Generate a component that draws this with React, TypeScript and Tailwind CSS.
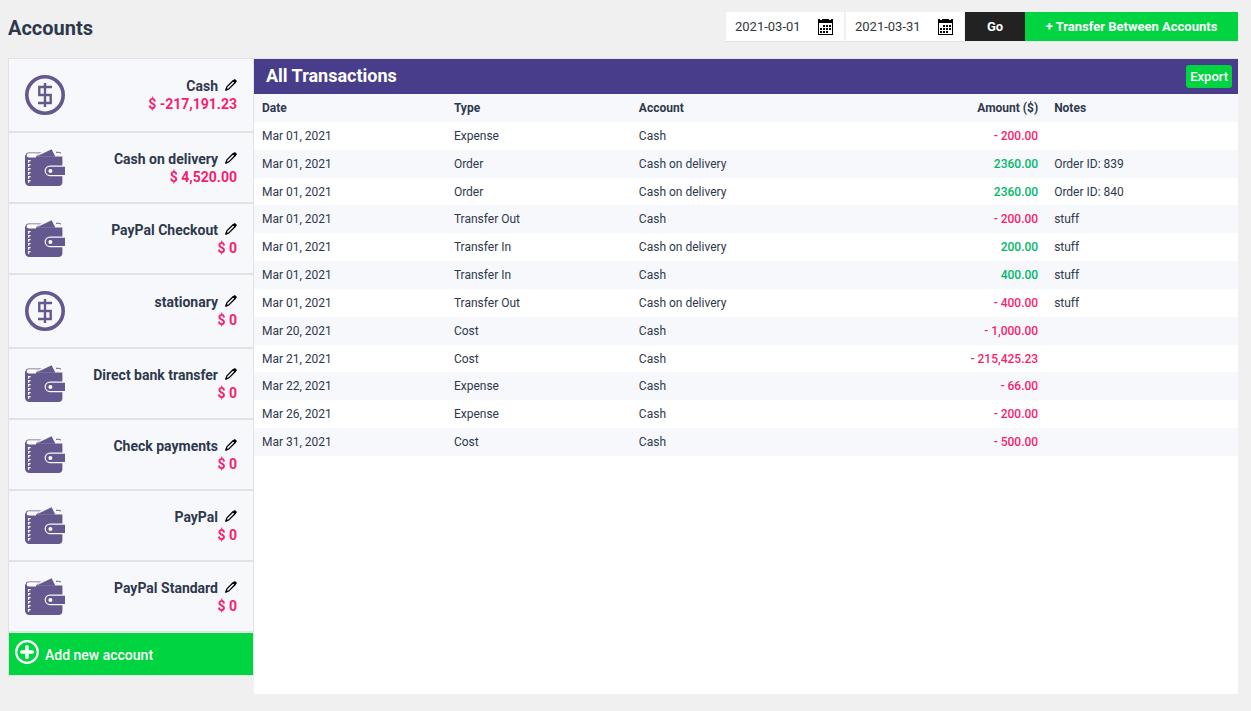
import React from "react";

type Kind = "cash" | "wallet";

const accounts: { name: string; amount: string; kind: Kind }[] = [
  { name: "Cash", amount: "$ -217,191.23", kind: "cash" },
  { name: "Cash on delivery", amount: "$ 4,520.00", kind: "wallet" },
  { name: "PayPal Checkout", amount: "$ 0", kind: "wallet" },
  { name: "stationary", amount: "$ 0", kind: "cash" },
  { name: "Direct bank transfer", amount: "$ 0", kind: "wallet" },
  { name: "Check payments", amount: "$ 0", kind: "wallet" },
  { name: "PayPal", amount: "$ 0", kind: "wallet" },
  { name: "PayPal Standard", amount: "$ 0", kind: "wallet" },
];

const transactions: [string, string, string, string, string][] = [
  ["Mar 01, 2021", "Expense", "Cash", "- 200.00", ""],
  ["Mar 01, 2021", "Order", "Cash on delivery", "2360.00", "Order ID: 839"],
  ["Mar 01, 2021", "Order", "Cash on delivery", "2360.00", "Order ID: 840"],
  ["Mar 01, 2021", "Transfer Out", "Cash", "- 200.00", "stuff"],
  ["Mar 01, 2021", "Transfer In", "Cash on delivery", "200.00", "stuff"],
  ["Mar 01, 2021", "Transfer In", "Cash", "400.00", "stuff"],
  ["Mar 01, 2021", "Transfer Out", "Cash on delivery", "- 400.00", "stuff"],
  ["Mar 20, 2021", "Cost", "Cash", "- 1,000.00", ""],
  ["Mar 21, 2021", "Cost", "Cash", "- 215,425.23", ""],
  ["Mar 22, 2021", "Expense", "Cash", "- 66.00", ""],
  ["Mar 26, 2021", "Expense", "Cash", "- 200.00", ""],
  ["Mar 31, 2021", "Cost", "Cash", "- 500.00", ""],
];

function CashIcon() {
  return (
    <svg width="40" height="40" viewBox="0 0 40 40" fill="none" stroke="#65588f" aria-hidden="true">
      <circle cx="20" cy="20" r="18.2" strokeWidth="3.6" />
      <path d="M27 12H14.3v8h11.4v8H13M20 8v24" strokeWidth="2.4" />
    </svg>
  );
}

function WalletIcon() {
  return (
    <svg width="40" height="37" viewBox="0 0 40 37" aria-hidden="true">
      <path
        d="M.8 6.2A2.8 2.8 0 0 1 3.6 3.4H16L11.6 7.6H37.4V16.4H25a5.4 5.4 0 0 0 0 10.8H37.4V33a4 4 0 0 1-4 4H4.4A4.4 4.4 0 0 1 0 32.6V6.2Z"
        fill="#65588f"
      />
      <path d="M3.8 4.2H15.5L11.8 6.4 10.8 8.4H3.6a2.1 2.1 0 0 1 .2-4.2Z" fill="#fff" />
      <path d="M11 7.7 26.6 0.2 30.4 7.7Z" fill="#65588f" />
      <path d="M31 3.3H33.6Q35 3.4 36 4.2" stroke="#65588f" strokeWidth="1" fill="none" />
      <path d="M25 17.8H40V26H25a4.1 4.1 0 0 1 0-8.2Z" fill="#65588f" />
      <circle cx="25.4" cy="21.9" r="2" fill="#fff" />
      <path
        d="M5.6 11.7H3.6V13.8M5.6 15.7H3.6V17.8M5.6 19.7H3.6V21.8M5.6 23.7H3.6V25.8M5.6 27.7H3.6V29.8M5.6 31.7H3.6V33.8"
        stroke="#fff"
        strokeWidth="1.3"
        fill="none"
      />
    </svg>
  );
}

function PencilIcon() {
  return (
    <svg width="12" height="12" viewBox="0 0 12 12" fill="none" stroke="#000" aria-hidden="true">
      <path d="M1.9 7.9 8 1.8 10 3.8 3.9 9.9 1 10.9Z" strokeWidth="1.3" strokeLinejoin="round" />
      <path d="M8 1.7 9.2 .6Q9.9 .2 10.5 .8L11.2 1.5Q11.8 2.2 11.3 2.8L10.2 3.9Z" fill="#000" strokeWidth=".6" />
      <path d="M.1 11.9 1.1 8.8 3.2 10.8Z" fill="#000" stroke="none" />
    </svg>
  );
}

function CalendarIcon() {
  return (
    <svg width="15" height="16" viewBox="0 0 15 16" aria-hidden="true" shapeRendering="crispEdges">
      <path d="M0 0H2V1H4V0H11V1H13V0H15V16H0ZM1 4V15H14V4Z" fillRule="evenodd" />
      <path d="M5 6h2v2H5zM8 6h2v2H8zM11 6h2v2h-2zM2 9h2v2H2zM5 9h2v2H5zM8 9h2v2H8zM11 9h2v2h-2zM2 12h2v2H2zM5 12h2v2H5zM8 12h2v2H8z" />
    </svg>
  );
}

function DateField({ label, value }: { label: string; value: string }) {
  return (
    <div className="flex h-[30px] w-[118px] items-center border-b border-[#e2e2e2] bg-white pr-[11px] pl-[9px]">
      <input
        type="text"
        aria-label={label}
        defaultValue={value}
        className="min-w-0 flex-1 bg-transparent text-[13px] text-[#32373c] outline-none"
      />
      <button type="button" aria-label={"Pick " + label.toLowerCase()}>
        <CalendarIcon />
      </button>
    </div>
  );
}

export default function App() {
  return (
    <div className="min-h-screen bg-[#f0f0f0] pt-3 pr-[13px] pb-4 pl-2 font-['Roboto',sans-serif] text-[#2e384d]">
      <header className="flex items-start justify-between">
        <h1 className="text-xl leading-8 font-bold">Accounts</h1>
        <form className="flex" onSubmit={(e) => e.preventDefault()}>
          <div className="mr-px flex gap-0.5">
            <DateField label="Start date" value="2021-03-01" />
            <DateField label="End date" value="2021-03-31" />
          </div>
          <button type="submit" className="h-[29px] w-[60px] bg-[#222] text-[13px] font-bold text-white">
            Go
          </button>
          <button type="button" className="h-[29px] w-[213px] bg-[#00d440] text-[13px] font-bold text-white">
            + Transfer Between Accounts
          </button>
        </form>
      </header>

      <main className="mt-3.5 flex items-start">
        <aside className="w-[246px] shrink-0 border border-[#e2e2e2]">
          <ul>
            {accounts.map((a) => (
              <li
                key={a.name}
                className="flex items-center justify-between border-b-2 border-[#e2e2e2] bg-[#f7f8fc] px-4 py-4"
              >
                {a.kind === "cash" ? <CashIcon /> : <WalletIcon />}
                <div className="text-right text-sm leading-[18px] font-bold">
                  <div className="flex items-center justify-end gap-[7px]">
                    <span>{a.name}</span>
                    <button type="button" aria-label={"Edit " + a.name} className="pb-0.5">
                      <PencilIcon />
                    </button>
                  </div>
                  <div className="text-[#f71d6f]">{a.amount}</div>
                </div>
              </li>
            ))}
          </ul>
          <button
            type="button"
            className="flex h-[42px] w-full items-start gap-[6px] bg-[#00d440] px-[6px] pt-[7px] text-sm leading-6 font-medium text-white"
          >
            <svg width="24" height="24" viewBox="0 0 24 24" fill="none" stroke="#fff" aria-hidden="true">
              <circle cx="12" cy="12" r="10.8" strokeWidth="2.2" />
              <path d="M12 6.8v10.4M6.8 12h10.4" strokeWidth="3.6" strokeLinecap="round" />
            </svg>
            <span className="pt-[3px]">Add new account</span>
          </button>
        </aside>

        <section className="min-h-[636px] min-w-0 flex-1 border-t border-[#e2e2e2] bg-white">
          <div className="flex h-[35px] items-center justify-between bg-[#483d8b] pr-[6px] pl-3 text-white">
            <h2 className="pb-0.5 text-lg font-bold">All Transactions</h2>
            <button type="button" className="h-[23px] rounded-[3px] bg-[#00d440] px-1 text-[13px] font-medium">
              Export
            </button>
          </div>
          <table className="h-[362px] w-full table-fixed text-left text-xs">
            <thead>
              <tr className="h-7 bg-[#f7f8fc]">
                <th className="w-[19.5%] px-2 font-bold">Date</th>
                <th className="w-[18.8%] px-2 font-bold">Type</th>
                <th className="px-2 font-bold">Account</th>
                <th className="w-[20%] px-2 text-right font-bold">Amount ($)</th>
                <th className="w-[19.5%] px-2 font-bold">Notes</th>
              </tr>
            </thead>
            <tbody>
              {transactions.map(([date, type, account, amount, notes], i) => (
                <tr key={i} className="odd:bg-white even:bg-[#f7f8fc]">
                  <td className="px-2">{date}</td>
                  <td className="px-2">{type}</td>
                  <td className="px-2">{account}</td>
                  <td
                    className={
                      "px-2 text-right font-medium " + (amount.startsWith("-") ? "text-[#f71d6f]" : "text-[#00b869]")
                    }
                  >
                    {amount}
                  </td>
                  <td className="px-2">{notes}</td>
                </tr>
              ))}
            </tbody>
          </table>
        </section>
      </main>
    </div>
  );
}
